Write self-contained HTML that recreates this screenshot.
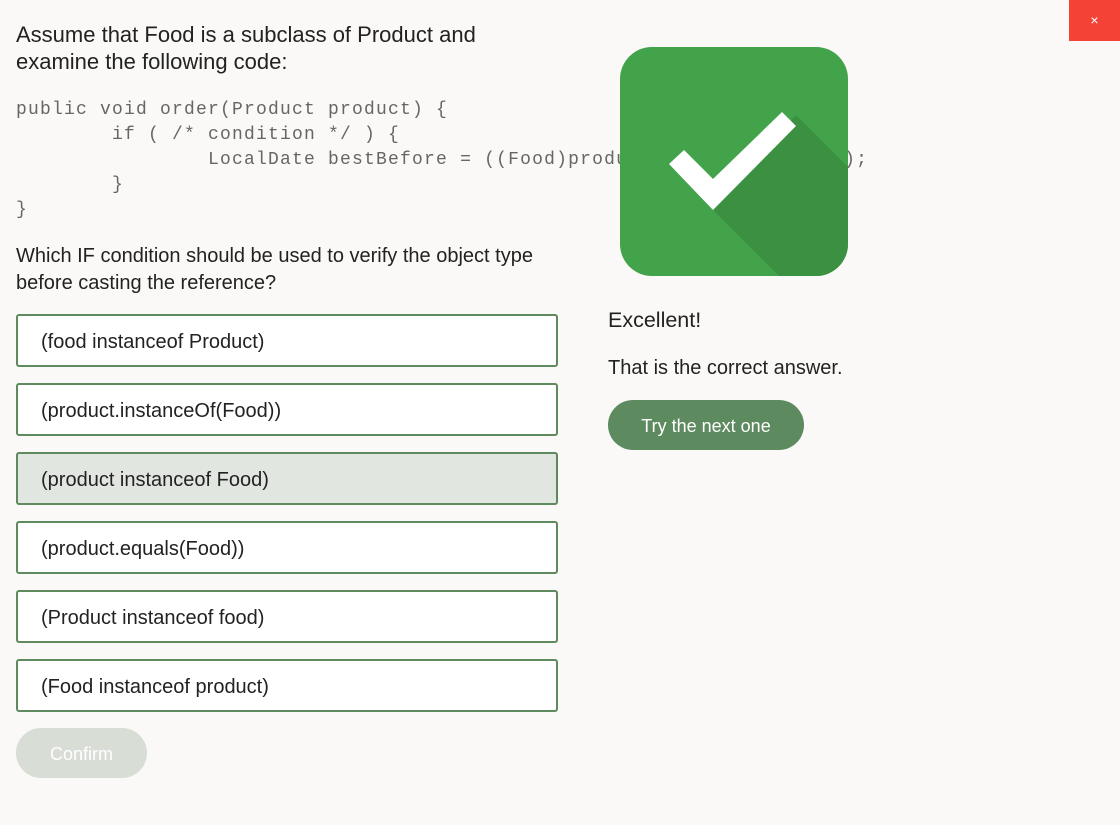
<!DOCTYPE html>
<html><head><style>
body{margin:0;width:1120px;height:825px;background:#faf9f7;font-family:"Liberation Sans",sans-serif;color:#222;position:relative;overflow:hidden}
.a{position:absolute}
.q{left:16px;top:21px;font-size:22px;line-height:27px}
pre{position:absolute;left:16px;top:98px;margin:0;font-family:"Liberation Mono",monospace;font-size:18px;line-height:25px;color:#666;letter-spacing:1.2px}
.q2{left:16px;top:243px;font-size:20px;line-height:27px}
.opt{position:absolute;left:16px;width:538px;height:49px;border:2px solid #5e8a5e;border-radius:3px;background:#fff;font-size:20px;line-height:53px}
.opt span{margin-left:23px}
.sel{background:#e1e6e0}
.btn{position:absolute;border-radius:25px;color:#fff;font-size:18px;text-align:center;line-height:52px;height:50px}
</style></head><body>
<div class="a" style="left:1069px;top:0;width:51px;height:41px;background:#f44336;color:#fff;text-align:center;line-height:41px;font-size:14px">×</div>
<div class="a q">Assume that Food is a subclass of Product and<br>examine the following code:</div>
<pre>public void order(Product product) {
        if ( /* condition */ ) {
                LocalDate bestBefore = ((Food)product).getBestBefore();
        }
}</pre>
<div class="a q2">Which IF condition should be used to verify the object type<br>before casting the reference?</div>
<div class="opt" style="top:314px"><span>(food instanceof Product)</span></div>
<div class="opt" style="top:383px"><span>(product.instanceOf(Food))</span></div>
<div class="opt sel" style="top:452px"><span>(product instanceof Food)</span></div>
<div class="opt" style="top:521px"><span>(product.equals(Food))</span></div>
<div class="opt" style="top:590px"><span>(Product instanceof food)</span></div>
<div class="opt" style="top:659px"><span>(Food instanceof product)</span></div>
<div class="btn" style="left:16px;top:728px;width:131px;background:#d8ddd6">Confirm</div>
<svg class="a" style="left:620px;top:47px" width="228" height="229" viewBox="0 0 228 229">
<defs><clipPath id="c"><rect width="228" height="229" rx="32"/></clipPath></defs>
<g clip-path="url(#c)">
<rect width="228" height="229" fill="#43a34b"/>
<polygon points="93,163 176,68 240,132 240,260 190,260" fill="#3b9141"/>
<polygon points="49,117 64,103 93,132 162,65 176,79 93,163" fill="#fff"/>
</g></svg>
<div class="a" style="left:608px;top:308px;font-size:21.5px">Excellent!</div>
<div class="a" style="left:608px;top:357px;font-size:20px">That is the correct answer.</div>
<div class="btn" style="left:608px;top:400px;width:196px;background:#5e8a60">Try the next one</div>
</body></html>
